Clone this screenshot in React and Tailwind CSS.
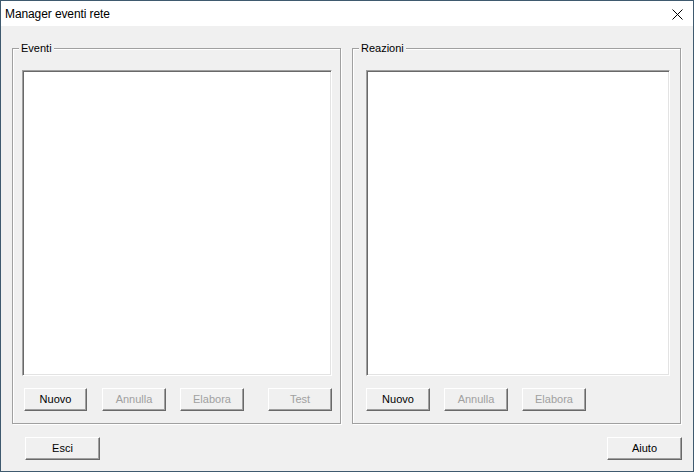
import React from 'react';

const Btn = ({ label, disabled, className = '' }) => (
    <div
        className={`h-[23px] flex items-center justify-center bg-[#f0f0f0] border border-t-white border-l-white border-r-[#696969] border-b-[#696969] shadow-[inset_-1px_-1px_0_#a0a0a0] text-[11px] ${disabled ? 'text-[#a0a0a0]' : 'text-black'} ${className}`}
    >
        {label}
    </div>
);

const ListBox = ({ className = '' }) => (
    <div className={`bg-white border border-t-[#a0a0a0] border-l-[#a0a0a0] border-r-white border-b-white shadow-[inset_1px_1px_0_#696969,inset_-1px_-1px_0_#e3e3e3] ${className}`} />
);

const Group = ({ title, children }) => (
    <div className="relative w-[329px] h-[376px] border border-[#a0a0a0] shadow-[1px_1px_0_#fff,inset_1px_1px_0_#fff]">
        <span className="absolute left-[6px] top-[-8px] px-[2px] bg-[#f0f0f0] text-[11px] leading-[14px] text-black">
            {title}
        </span>
        {children}
    </div>
);

export default function App() {
    return (
        <div
            className="w-[694px] h-[472px] border border-[#3f5a6f] bg-[#f0f0f0] flex flex-col"
            style={{ fontFamily: '"Liberation Sans", Arial, sans-serif' }}
        >
            {/* title bar */}
            <div className="h-[25px] bg-white flex items-center justify-between pl-[4px] pr-[10px]">
                <span className="text-[12px] tracking-[-0.1px] text-black">Manager eventi rete</span>
                <svg width="11" height="11" viewBox="0 0 11 11" className="mt-[1px]">
                    <path d="M0.5 0.5 L10.5 10.5 M10.5 0.5 L0.5 10.5" stroke="#000" strokeWidth="1" />
                </svg>
            </div>

            <div className="flex-1 flex flex-col pl-[11px] pt-[22px]">
                <div className="flex gap-[11px]">
                    <Group title="Eventi">
                        <div className="pl-[9px] pt-[21px]">
                            <ListBox className="w-[310px] h-[306px]" />
                            <div className="flex mt-[12px] pl-[2px]">
                                <Btn label="Nuovo" className="w-[63px]" />
                                <Btn label="Annulla" disabled className="w-[64px] ml-[15px]" />
                                <Btn label="Elabora" disabled className="w-[64px] ml-[14px]" />
                                <Btn label="Test" disabled className="w-[64px] ml-[24px]" />
                            </div>
                        </div>
                    </Group>
                    <Group title="Reazioni">
                        <div className="pl-[13px] pt-[21px]">
                            <ListBox className="w-[304px] h-[306px]" />
                            <div className="flex mt-[12px]">
                                <Btn label="Nuovo" className="w-[64px]" />
                                <Btn label="Annulla" disabled className="w-[64px] ml-[14px]" />
                                <Btn label="Elabora" disabled className="w-[64px] ml-[14px]" />
                            </div>
                        </div>
                    </Group>
                </div>

                <div className="flex justify-between mt-[13px] pl-[13px] pr-[11px]">
                    <Btn label="Esci" className="w-[75px]" />
                    <Btn label="Aiuto" className="w-[75px]" />
                </div>
            </div>
        </div>
    );
}
